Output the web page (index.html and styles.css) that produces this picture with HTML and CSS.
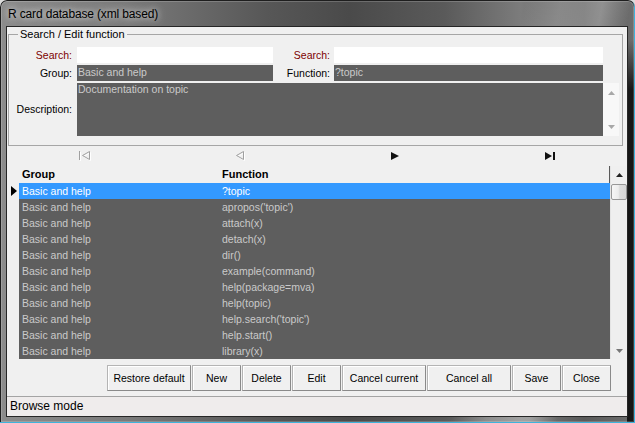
FILE: index.html
```html
<!DOCTYPE html>
<html>
<head>
<meta charset="utf-8">
<title>R card database (xml based)</title>
<link rel="stylesheet" href="styles.css">
</head>
<body>
<div class="window">
  <div class="titlebar"><span class="title">R card database (xml based)</span></div>
  <div class="client">
    <fieldset class="editbox">
      <legend>Search / Edit function</legend>
      <div class="form">
        <label class="lbl req r1 c1">Search:</label>
        <div class="input white r1 c2"></div>
        <label class="lbl req r1 c3">Search:</label>
        <div class="input white r1 c4"></div>
        <label class="lbl r2 c1">Group:</label>
        <div class="input dark r2 c2">Basic and help</div>
        <label class="lbl r2 c3">Function:</label>
        <div class="input dark r2 c4">?topic</div>
        <label class="lbl r3 c1">Description:</label>
        <div class="memo r3">
          <div class="memo-text">Documentation on topic</div>
          <div class="memo-scroll">
            <svg width="7" height="4" viewBox="0 0 7 4"><polygon points="0,4 3.5,0 7,4" fill="#a8a8a8"/></svg>
            <svg width="7" height="4" viewBox="0 0 7 4"><polygon points="0,0 3.5,4 7,0" fill="#a8a8a8"/></svg>
          </div>
        </div>
      </div>
    </fieldset>

    <div class="navigator">
      <div class="navbtn">
        <svg width="13" height="11" viewBox="0 0 13 11">
          <g fill="none" stroke="#ffffff" stroke-width="1">
            <path d="M1.5 1v9M11.5 1.5L4.5 5.5 11.5 9.5Z"/>
          </g>
          <g fill="none" stroke="#a0a0a0" stroke-width="1">
            <path d="M0.5 0v9M10.5 0.5L3.5 4.5 10.5 8.5Z"/>
          </g>
        </svg>
      </div>
      <div class="navbtn">
        <svg width="11" height="11" viewBox="0 0 11 11">
          <path d="M9.5 1.5L2.5 5.5 9.5 9.5Z" fill="none" stroke="#ffffff"/>
          <path d="M8.5 0.5L1.5 4.5 8.5 8.5Z" fill="none" stroke="#a0a0a0"/>
        </svg>
      </div>
      <div class="navbtn">
        <svg width="8" height="8" viewBox="0 0 8 8"><polygon points="0,0 8,4 0,8" fill="#111"/></svg>
      </div>
      <div class="navbtn">
        <svg width="10" height="8" viewBox="0 0 10 8"><polygon points="0,0 7,4 0,8" fill="#111"/><rect x="8" y="0" width="2" height="8" fill="#111"/></svg>
      </div>
    </div>

    <div class="grid">
      <div class="grid-main">
        <div class="grow header"><div class="ind"></div><div class="cell g">Group</div><div class="cell f">Function</div></div>
        <div class="grow sel"><div class="ind"><svg width="6" height="10" viewBox="0 0 6 10"><polygon points="0,0 6,5 0,10" fill="#000"/></svg></div><div class="cell g">Basic and help</div><div class="cell f">?topic</div></div>
        <div class="grow"><div class="ind"></div><div class="cell g">Basic and help</div><div class="cell f">apropos('topic')</div></div>
        <div class="grow"><div class="ind"></div><div class="cell g">Basic and help</div><div class="cell f">attach(x)</div></div>
        <div class="grow"><div class="ind"></div><div class="cell g">Basic and help</div><div class="cell f">detach(x)</div></div>
        <div class="grow"><div class="ind"></div><div class="cell g">Basic and help</div><div class="cell f">dir()</div></div>
        <div class="grow"><div class="ind"></div><div class="cell g">Basic and help</div><div class="cell f">example(command)</div></div>
        <div class="grow"><div class="ind"></div><div class="cell g">Basic and help</div><div class="cell f">help(package=mva)</div></div>
        <div class="grow"><div class="ind"></div><div class="cell g">Basic and help</div><div class="cell f">help(topic)</div></div>
        <div class="grow"><div class="ind"></div><div class="cell g">Basic and help</div><div class="cell f">help.search('topic')</div></div>
        <div class="grow"><div class="ind"></div><div class="cell g">Basic and help</div><div class="cell f">help.start()</div></div>
        <div class="grow"><div class="ind"></div><div class="cell g">Basic and help</div><div class="cell f">library(x)</div></div>
      </div>
      <div class="gscroll">
        <div class="sbtn"><svg width="7" height="4" viewBox="0 0 7 4"><polygon points="0,4 3.5,0 7,4" fill="#222"/></svg></div>
        <div class="thumb"></div>
        <div class="track"></div>
        <div class="sbtn"><svg width="7" height="4" viewBox="0 0 7 4"><polygon points="0,0 3.5,4 7,0" fill="#777"/></svg></div>
      </div>
    </div>

    <div class="buttons">
      <button class="btn wide">Restore default</button>
      <button class="btn">New</button>
      <button class="btn">Delete</button>
      <button class="btn">Edit</button>
      <button class="btn wide">Cancel current</button>
      <button class="btn wide">Cancel all</button>
      <button class="btn">Save</button>
      <button class="btn">Close</button>
    </div>

    <div class="status">Browse mode</div>
  </div>
</div>
</body>
</html>
```

FILE: styles.css
```css
* { box-sizing: border-box; }

html { background: #dcdcdc; }

body {
  margin: 0;
  font-family: "Liberation Sans", Arial, sans-serif;
}

.window {
  width: 635px;
  height: 423px;
  padding: 0 7px 6px 6px;
  border-radius: 7px 7px 0 0;
  display: flex;
  flex-direction: column;
  background:
    linear-gradient(180deg, rgba(22,22,22,0) 0px, rgba(22,22,22,0) 40px, #161616 90px, #161616 100%) right 1px top 0 / 7px 100% no-repeat,
    linear-gradient(100deg, rgba(255,255,255,0) 0%, rgba(255,255,255,0) 74%, rgba(255,255,255,0.22) 79%, rgba(255,255,255,0.3) 85%, rgba(255,255,255,0) 89%, rgba(255,255,255,0) 100%),
    linear-gradient(90deg, #8c8c8c 0%, #7a7a7a 20%, #575757 42%, #4a4a4a 55%, #5a5a5a 70%, #7c7c7c 82%, #5a5a5a 92%, #6e6e6e 100%);
  box-shadow: inset -1px -1px 0 #3fb3dc, inset 0 0 0 1px #1e1e1e, inset 0 0 0 2px rgba(255,255,255,0.18);
}

.titlebar {
  height: 26px;
  flex: none;
  padding-left: 2px;
  display: flex;
  align-items: center;
}

.title {
  font-size: 12px;
  letter-spacing: -0.15px;
  color: #000;
  padding-top: 2px;
  text-shadow: 0 0 6px rgba(255,255,255,0.7), 0 0 10px rgba(255,255,255,0.5);
}

.client {
  flex: 1;
  border: 1px solid #262626;
  background: #f0f0f0;
  display: flex;
  flex-direction: column;
  min-height: 0;
}

/* ---------- group box ---------- */
.editbox {
  margin: 1px 4px 0 1px;
  padding: 6px 0 9px 0;
  border: 1px solid #a6a6a6;
  min-width: 0;
}

.editbox legend {
  margin-left: 9px;
  padding: 0 2px;
  font-size: 11px;
  line-height: 13px;
  color: #000;
}

.form {
  display: grid;
  grid-template-columns: 68px 196px 61px 269px 16px;
  grid-template-rows: 16px 16px 53px;
  row-gap: 2px;
  font-size: 10.5px;
}

.r1 { grid-row: 1; }
.r2 { grid-row: 2; }
.r3 { grid-row: 3; }
.c1 { grid-column: 1; }
.c2 { grid-column: 2; }
.c3 { grid-column: 3; }
.c4 { grid-column: 4; }

.lbl {
  align-self: center;
  text-align: right;
  color: #000;
  line-height: 13px;
}
.lbl.c1 { padding-right: 5px; }
.lbl.c3 { padding-right: 4px; }
.lbl.req { color: #7d0000; }

.input {
  line-height: 15px;
  padding-left: 1px;
  white-space: nowrap;
  overflow: hidden;
}
.white { background: #ffffff; }
.dark { background: #5e5e5e; color: #cacaca; }

.memo {
  grid-column: 2 / 6;
  display: flex;
}

.memo-text {
  flex: 1;
  background: #5e5e5e;
  color: #cacaca;
  padding-left: 1px;
  line-height: 13px;
}

.memo-scroll {
  width: 16px;
  flex: none;
  background: #f8f8f8;
  display: flex;
  flex-direction: column;
  justify-content: space-between;
  align-items: center;
  padding: 8px 0 7px 1px;
}
.memo-scroll svg { display: block; }

/* ---------- navigator ---------- */
.navigator {
  height: 20px;
  flex: none;
  margin-left: 1px;
  display: flex;
}

.navbtn {
  flex: 1;
  display: flex;
  align-items: center;
  justify-content: center;
}
.navbtn svg { display: block; }

/* ---------- grid ---------- */
.grid {
  height: 193px;
  flex: none;
  margin-left: 1px;
  display: flex;
}

.grid-main {
  width: 602px;
  flex: none;
  font-size: 10.5px;
}

.grow {
  display: flex;
  height: 16px;
  line-height: 16px;
}

.ind {
  width: 11px;
  flex: none;
  display: flex;
  align-items: center;
  padding-left: 3px;
}
.ind svg { display: block; }

.cell {
  padding-left: 3px;
  white-space: nowrap;
  overflow: hidden;
  background: #5e5e5e;
  color: #cacaca;
}
.cell.g { width: 200px; flex: none; }
.cell.f { flex: 1; }

.grow.header {
  height: 17px;
  line-height: 17px;
  font-size: 11px;
  font-weight: bold;
  box-shadow: inset -1px 0 0 #5a5a5a;
}
.grow.header .cell {
  background: transparent;
  color: #000;
}

.grow.sel .cell {
  background: #3399ff;
  color: #ffffff;
}

.gscroll {
  width: 17px;
  flex: none;
  background: #efefef;
  border-left: 1px solid #e4e4e4;
  display: flex;
  flex-direction: column;
}

.sbtn {
  height: 17px;
  flex: none;
  display: flex;
  align-items: center;
  justify-content: center;
  padding-left: 1px;
}
.sbtn svg { display: block; }

.thumb {
  height: 16px;
  flex: none;
  margin: 1px 0 0 0;
  border: 1px solid #979797;
  border-radius: 2px;
  background: linear-gradient(90deg, #f6f6f6 0%, #ececec 45%, #dcdcdc 55%, #d6d6d6 100%);
}

.track { flex: 1; }

/* ---------- buttons ---------- */
.buttons {
  height: 26px;
  flex: none;
  margin-top: 6px;
  padding-right: 16px;
  display: flex;
  justify-content: flex-end;
  gap: 1px;
}

.btn {
  width: 49px;
  height: 26px;
  margin: 0;
  padding: 0;
  font-family: "Liberation Sans", Arial, sans-serif;
  font-size: 10.5px;
  color: #000;
  background: #f0f0f0;
  border: 1px solid;
  border-color: #b4b4b4 #8a8a8a #8a8a8a #b4b4b4;
  border-radius: 0;
  box-shadow: inset 1px 1px 0 #ffffff;
}
.btn.wide { width: 84px; }

/* ---------- status ---------- */
.status {
  flex: 1;
  margin-top: 5px;
  border-top: 1px solid #a4a4a4;
  background: #efecec;
  padding-left: 3px;
  font-size: 12px;
  line-height: 19px;
  color: #000;
}
```
